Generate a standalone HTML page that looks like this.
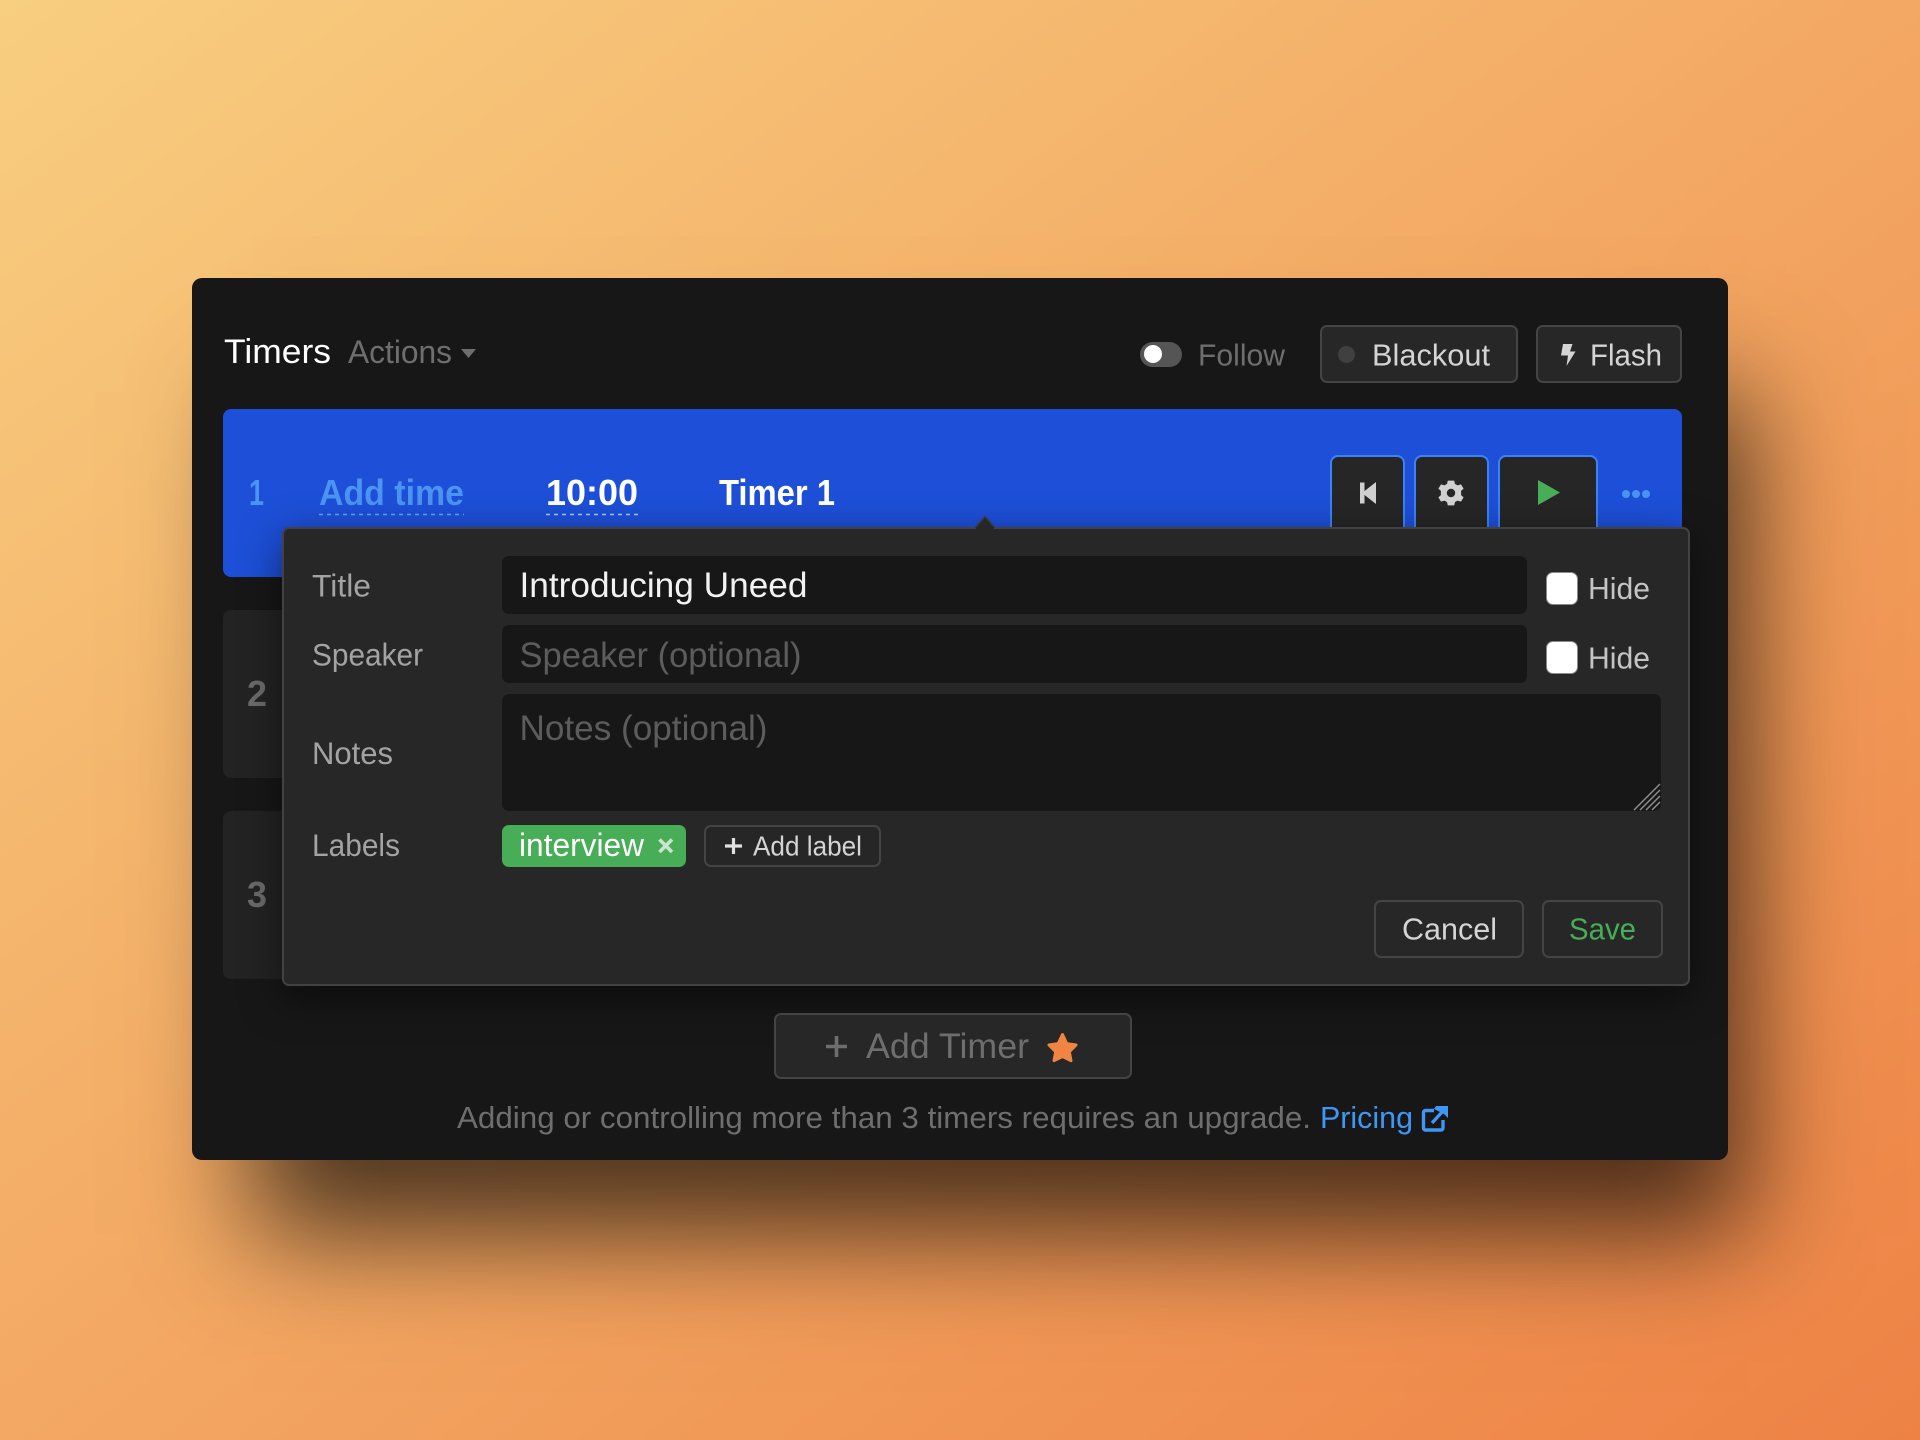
<!DOCTYPE html>
<html lang="en"><head><meta charset="utf-8"><title>Timers</title>
<style>
html,body{margin:0;padding:0;width:1920px;height:1440px;overflow:hidden}
body{position:relative;background:linear-gradient(to bottom right,#f8ce80 0%,#f3a863 50%,#ee8245 100%);font-family:"Liberation Sans",sans-serif}
.b{position:absolute;box-sizing:border-box}
svg.t{position:absolute;left:0;top:0;width:1920px;height:1440px;overflow:visible}
svg.t text{font-family:"Liberation Sans",sans-serif;white-space:pre}
.btn{background:#272727;border:2px solid #444;border-radius:7px}
.ipt{background:#171717;border-radius:7px}
.ctl{background:#262626;border:2px solid #3b82f6;border-radius:8px}
.cb{background:#fff;border:1px solid #8a8a8a;border-radius:7px}
</style></head><body>
<div class="b" style="left:192px;top:278px;width:1536px;height:882px;background:#171717;border-radius:10px;box-shadow:40px 95px 105px -20px rgba(0,0,0,.68)"></div>
<!-- toolbar -->
<div class="b" style="left:1140px;top:342px;width:42px;height:25px;border-radius:13px;background:#555"></div>
<div class="b" style="left:1144px;top:345px;width:18px;height:18px;border-radius:50%;background:#fff"></div>
<div class="b btn" style="left:1320px;top:325px;width:198px;height:58px"></div>
<div class="b" style="left:1338px;top:346px;width:17px;height:17px;border-radius:50%;background:#404040"></div>
<div class="b btn" style="left:1536px;top:325px;width:146px;height:58px"></div>
<!-- rows -->
<div class="b" style="left:223px;top:409px;width:1459px;height:168px;background:#1d4fd8;border-radius:8px"></div>
<div class="b" style="left:223px;top:610px;width:200px;height:168px;background:#232323;border-radius:8px"></div>
<div class="b" style="left:223px;top:811px;width:200px;height:168px;background:#232323;border-radius:8px"></div>
<div class="b ctl" style="left:1330px;top:455px;width:75px;height:90px"></div>
<div class="b ctl" style="left:1414px;top:455px;width:75px;height:90px"></div>
<div class="b ctl" style="left:1498px;top:455px;width:100px;height:90px"></div>
<svg class="t" viewBox="0 0 1920 1440">
<g fill="#4c94f2"><circle cx="1626" cy="494" r="4"/><circle cx="1636" cy="494" r="4"/><circle cx="1646" cy="494" r="4"/></g>
<line x1="319" y1="514.5" x2="464" y2="514.5" stroke="#60a5fa" stroke-width="1.6" stroke-dasharray="4 4"/>
<line x1="546" y1="514.5" x2="638" y2="514.5" stroke="#a9cdfb" stroke-width="1.6" stroke-dasharray="4 4"/>
<text x="249" y="505" font-size="36" font-weight="700" fill="#4c94f2" textLength="15" lengthAdjust="spacingAndGlyphs">1</text>
<text x="319" y="505" font-size="36" font-weight="700" fill="#4c94f2" textLength="145" lengthAdjust="spacingAndGlyphs">Add time</text>
<text x="546" y="505" font-size="36" font-weight="700" fill="#fff" textLength="92" lengthAdjust="spacingAndGlyphs">10:00</text>
<text x="719" y="505" font-size="36" font-weight="700" fill="#fff" textLength="116" lengthAdjust="spacingAndGlyphs">Timer 1</text>
<text x="247" y="706" font-size="36" font-weight="700" fill="#6b6b6b" textLength="20" lengthAdjust="spacingAndGlyphs">2</text>
<text x="247" y="907" font-size="36" font-weight="700" fill="#6b6b6b" textLength="20" lengthAdjust="spacingAndGlyphs">3</text>
</svg>
<!-- popover -->
<div class="b" style="left:282px;top:527px;width:1408px;height:459px;background:#272727;border:2px solid #424242;border-radius:7px;box-shadow:0 12px 40px rgba(0,0,0,.5)"></div>
<div class="b ipt" style="left:502px;top:556px;width:1025px;height:58px"></div>
<div class="b ipt" style="left:502px;top:625px;width:1025px;height:58px"></div>
<div class="b ipt" style="left:502px;top:694px;width:1159px;height:117px"></div>
<div class="b cb" style="left:1546px;top:572px;width:32px;height:33px"></div>
<div class="b cb" style="left:1546px;top:641px;width:32px;height:33px"></div>
<div class="b" style="left:502px;top:825px;width:184px;height:42px;background:#48ad57;border-radius:7px"></div>
<div class="b btn" style="left:704px;top:825px;width:177px;height:42px;background:#262626"></div>
<div class="b btn" style="left:1374px;top:900px;width:150px;height:58px"></div>
<div class="b btn" style="left:1542px;top:900px;width:121px;height:58px"></div>
<div class="b btn" style="left:774px;top:1013px;width:358px;height:66px"></div>
<svg class="t" viewBox="0 0 1920 1440">
<!-- popover arrow -->
<path d="M975 528L985 516.5L995 528" fill="#272727" stroke="#3a3a3a" stroke-width="1.5"/>
<rect x="976" y="527" width="18" height="3" fill="#272727"/>
<!-- header text -->
<text x="224" y="363" font-size="34" fill="#fff" textLength="107" lengthAdjust="spacingAndGlyphs">Timers</text>
<text x="348" y="363" font-size="32" fill="#6e6e6e" textLength="104" lengthAdjust="spacingAndGlyphs">Actions</text>
<path d="M461 349H476L468.5 358Z" fill="#6e6e6e"/>
<text x="1198" y="365.5" font-size="31" fill="#6e6e6e" textLength="87" lengthAdjust="spacingAndGlyphs">Follow</text>
<text x="1372" y="365.5" font-size="31" fill="#d4d4d4" textLength="118" lengthAdjust="spacingAndGlyphs">Blackout</text>
<path d="M1563 344H1572.5L1570 351.5H1575.5L1566.5 366L1568 355.5H1561Z" fill="#d4d4d4"/>
<text x="1590" y="365.5" font-size="31" fill="#d4d4d4" textLength="72" lengthAdjust="spacingAndGlyphs">Flash</text>
<!-- control icons -->
<path d="M1360 482.5H1364.5V503.5H1360ZM1376 482V504L1362 493Z" fill="#d0d0d0"/>
<g fill="#d0d0d0" transform="translate(1451 493)">
<path fill-rule="evenodd" d="M-3.2-12.4H3.2L4-9A9.6 9.6 0 0 1 6.5-7.6L10-8.6 12.6-4.4 10-2A9.6 9.6 0 0 1 10 2L12.6 4.4 10 8.6 6.5 7.6A9.6 9.6 0 0 1 4 9L3.2 12.4H-3.2L-4 9A9.6 9.6 0 0 1-6.5 7.6L-10 8.6-12.6 4.4-10 2A9.6 9.6 0 0 1-10-2L-12.6-4.4-10-8.6-6.5-7.6A9.6 9.6 0 0 1-4-9ZM0-4.2A4.2 4.2 0 1 0 0 4.2 4.2 4.2 0 1 0 0-4.2Z"/>
</g>
<path d="M1538 480L1560 492.5L1538 505Z" fill="#48ad57"/>
<!-- form labels -->
<g font-size="31.5" fill="#a3a3a3">
<text x="312" y="596.5" textLength="59" lengthAdjust="spacingAndGlyphs">Title</text>
<text x="312" y="665.5" textLength="111" lengthAdjust="spacingAndGlyphs">Speaker</text>
<text x="312" y="764" textLength="81" lengthAdjust="spacingAndGlyphs">Notes</text>
<text x="312" y="856" textLength="88" lengthAdjust="spacingAndGlyphs">Labels</text>
</g>
<text x="519.5" y="597" font-size="35" fill="#f2f2f2" textLength="288" lengthAdjust="spacingAndGlyphs">Introducing Uneed</text>
<text x="519.5" y="667" font-size="35" fill="#5c5c5c" textLength="282" lengthAdjust="spacingAndGlyphs">Speaker (optional)</text>
<text x="519.5" y="740" font-size="35" fill="#5c5c5c" textLength="248" lengthAdjust="spacingAndGlyphs">Notes (optional)</text>
<g font-size="31" fill="#c4c4c4">
<text x="1588" y="599" textLength="62" lengthAdjust="spacingAndGlyphs">Hide</text>
<text x="1588" y="668.5" textLength="62" lengthAdjust="spacingAndGlyphs">Hide</text>
</g>
<g stroke="#8f8f8f" stroke-width="1.4"><line x1="1634" y1="810" x2="1660" y2="784"/><line x1="1640" y1="810" x2="1660" y2="790"/><line x1="1646" y1="810" x2="1660" y2="796"/><line x1="1652" y1="810" x2="1660" y2="802"/></g>
<text x="519" y="856" font-size="32" fill="#fff" textLength="125" lengthAdjust="spacingAndGlyphs">interview</text>
<path d="M659.5 839.5L672 852M672 839.5L659.5 852" stroke="#cfe3d2" stroke-width="3.6"/>
<path d="M733.5 838V854M725 846H742" stroke="#e0e0e0" stroke-width="3.2"/>
<text x="753" y="855.5" font-size="28" fill="#d4d4d4" textLength="109" lengthAdjust="spacingAndGlyphs">Add label</text>
<text x="1402" y="939.5" font-size="31" fill="#d4d4d4" textLength="95" lengthAdjust="spacingAndGlyphs">Cancel</text>
<text x="1569" y="939.5" font-size="31" fill="#48ad57" textLength="67" lengthAdjust="spacingAndGlyphs">Save</text>
<!-- add timer -->
<path d="M836.5 1036V1057M826 1046.5H847" stroke="#6e6e6e" stroke-width="3.6"/>
<text x="866" y="1058" font-size="35" fill="#6e6e6e" textLength="163" lengthAdjust="spacingAndGlyphs">Add Timer</text>
<path d="M1062.5 1034.5L1066.8 1043.6 1076 1045 1069.3 1051.8 1071 1060.6 1062.5 1056.5 1054 1060.6 1055.7 1051.8 1049 1045 1058.2 1043.6Z" fill="#f08543" stroke="#f08543" stroke-width="3" stroke-linejoin="round"/>
<!-- footer -->
<text x="457" y="1128" font-size="31" fill="#6e6e6e" textLength="854" lengthAdjust="spacingAndGlyphs">Adding or controlling more than 3 timers requires an upgrade.</text>
<text x="1320" y="1128" font-size="31" fill="#4096f5" textLength="93" lengthAdjust="spacingAndGlyphs">Pricing</text>
<g fill="none" stroke="#4096f5" stroke-width="3.4">
<path d="M1434 1110.5H1425.5A2 2 0 0 0 1423.5 1112.5V1128A2 2 0 0 0 1425.5 1130H1441A2 2 0 0 0 1443 1128V1120"/>
<path d="M1432 1123L1443 1111"/>
</g>
<path d="M1436 1106H1448V1118L1444 1114 1434 1109Z" fill="#4096f5"/>
</svg>
</body></html>
